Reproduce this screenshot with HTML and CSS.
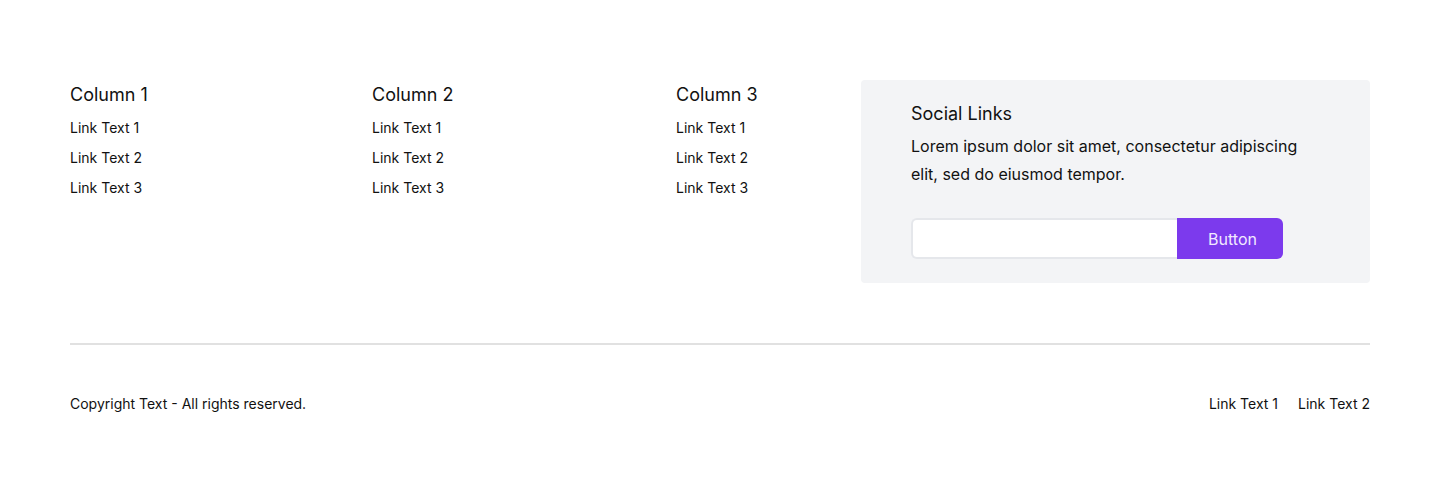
FILE: index.html
```html
<!DOCTYPE html>
<html lang="en">
<head>
<meta charset="utf-8">
<title>Footer</title>
<link rel="stylesheet" href="styles.css">
</head>
<body>
<footer class="footer">
  <div class="footer-top">
    <div class="col">
      <h3 class="col-title">Column 1</h3>
      <ul class="links">
        <li><a href="#">Link Text 1</a></li>
        <li><a href="#">Link Text 2</a></li>
        <li><a href="#">Link Text 3</a></li>
      </ul>
    </div>
    <div class="col">
      <h3 class="col-title">Column 2</h3>
      <ul class="links">
        <li><a href="#">Link Text 1</a></li>
        <li><a href="#">Link Text 2</a></li>
        <li><a href="#">Link Text 3</a></li>
      </ul>
    </div>
    <div class="col">
      <h3 class="col-title">Column 3</h3>
      <ul class="links">
        <li><a href="#">Link Text 1</a></li>
        <li><a href="#">Link Text 2</a></li>
        <li><a href="#">Link Text 3</a></li>
      </ul>
    </div>
    <div class="social">
      <h3 class="social-title">Social Links</h3>
      <p class="social-text">Lorem ipsum dolor sit amet, consectetur adipiscing elit, sed do eiusmod tempor.</p>
      <form class="subscribe">
        <input class="subscribe-input" type="text">
        <button class="subscribe-btn" type="button">Button</button>
      </form>
    </div>
  </div>
  <div class="footer-bottom">
    <p class="copyright">Copyright Text - All rights reserved.</p>
    <div class="bottom-links">
      <a href="#">Link Text 1</a>
      <a href="#">Link Text 2</a>
    </div>
  </div>
</footer>
</body>
</html>
```
FILE: styles.css
```css
* { box-sizing: border-box; }
html, body { margin: 0; padding: 0; background: #fff; }
body {
  font-family: Inter, "Noto Sans", sans-serif;
  color: #111111;
}
a { color: inherit; text-decoration: none; }

.footer {
  padding: 80px 70px 0;
}

.footer-top {
  display: grid;
  grid-template-columns: 302px 304px 185px 509px;
  align-items: start;
}

.col {
  padding-top: 1px;
}

.col-title {
  margin: 0;
  font-size: 18px;
  line-height: 28px;
  font-weight: 400;
}

.links {
  list-style: none;
  margin: 9px 0 0;
  padding: 0;
  display: flex;
  flex-direction: column;
  gap: 10px;
  font-size: 14px;
  line-height: 20px;
}

.social {
  background: #f3f4f6;
  border-radius: 4px;
  padding: 20px 50px 24px;
  height: 203px;
}

.social-title {
  margin: 0;
  font-size: 18px;
  line-height: 28px;
  font-weight: 400;
}

.social-text {
  margin: 4px 0 0;
  font-size: 16px;
  line-height: 28px;
  max-width: 400px;
}

.subscribe {
  display: flex;
  margin: 30px 0 0;
}

.subscribe-input {
  width: 266px;
  height: 41px;
  border: 2px solid #e5e7eb;
  border-right: none;
  border-radius: 6px 0 0 6px;
  background: #fff;
  outline: none;
  font: inherit;
  padding: 0 12px;
}

.subscribe-btn {
  width: 106px;
  height: 41px;
  border: none;
  border-radius: 0 6px 6px 0;
  background: #7c3aed;
  color: #f1e9ff;
  font-family: inherit;
  font-size: 16px;
  padding: 0 0 0 5px;
  cursor: pointer;
}

.footer-bottom {
  margin-top: 60px;
  border-top: 2px solid #e1e1e1;
  display: flex;
  justify-content: space-between;
  align-items: center;
  padding: 49px 0 70px;
  font-size: 14px;
  line-height: 20px;
}

.copyright { margin: 0; }

.bottom-links {
  display: flex;
  gap: 20px;
}
```
